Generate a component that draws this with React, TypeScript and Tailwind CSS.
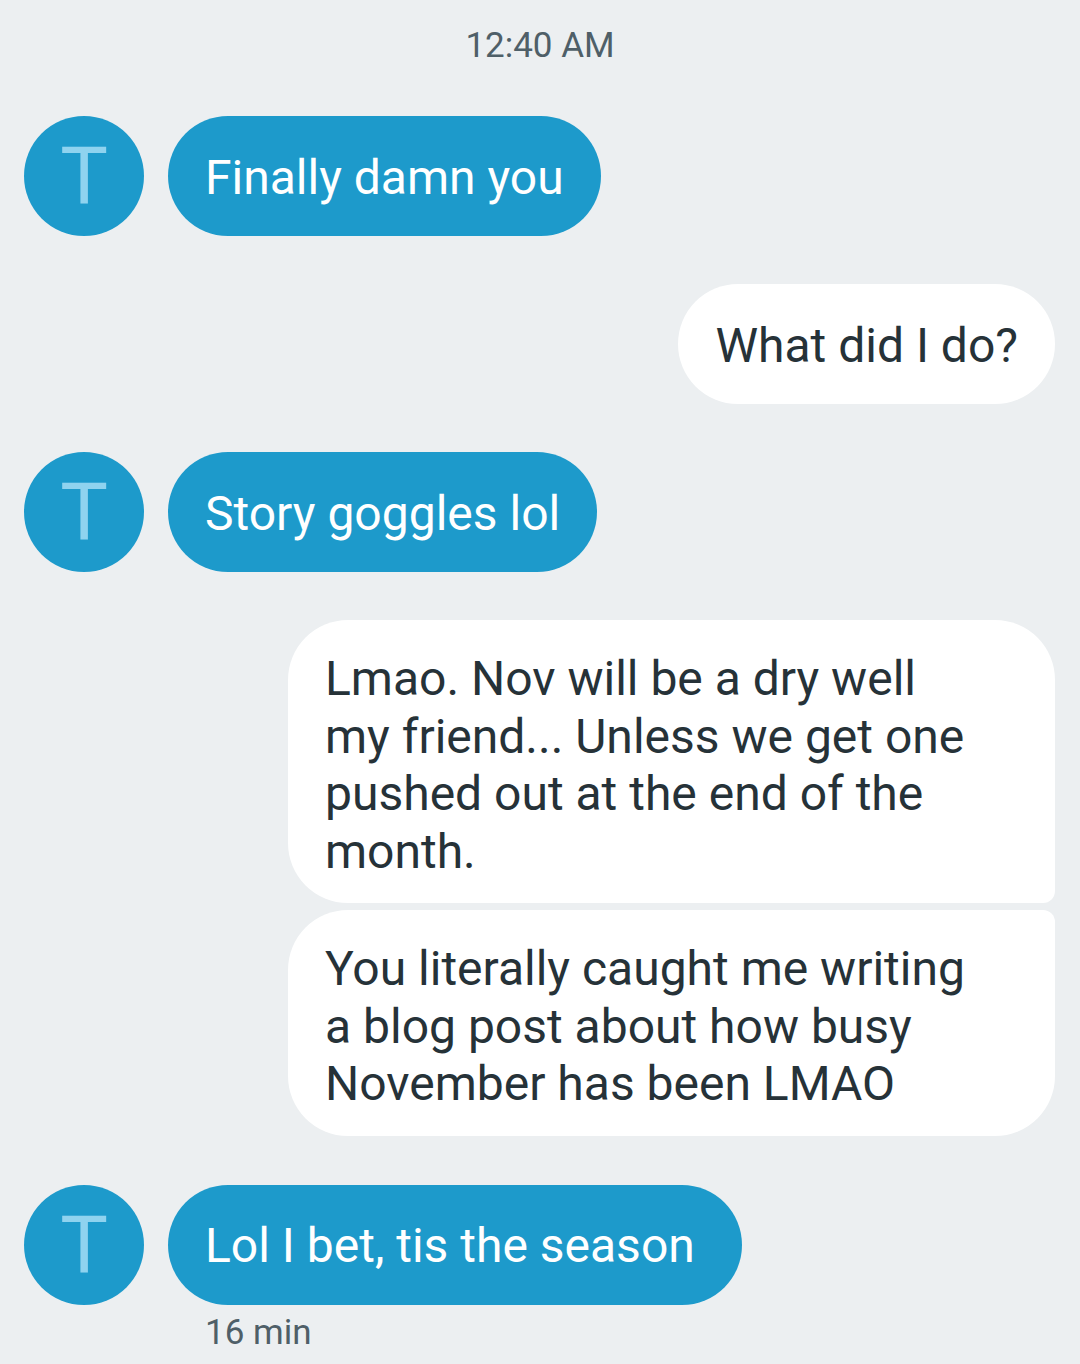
import React from 'react'

const font = { fontFamily: 'Roboto, "Noto Sans", sans-serif' }

const Avatar = () => (
    <div className="w-[120px] h-[120px] shrink-0 rounded-full bg-[#1d9acb] flex items-center justify-center">
        <span className="text-[80px] font-normal leading-none text-[#8fd3ef] mt-[2px]">T</span>
    </div>
)

const Incoming = ({ text, wide }: { text: string; wide?: boolean }) => (
    <div className="flex items-center gap-6 pl-6">
        <Avatar />
        <div
            className={
                wide
                    ? 'h-[120px] flex items-center rounded-full bg-[#1d9acb] pl-[37px] pr-[47px] pt-[3px] text-[48px] text-white'
                    : 'h-[120px] flex items-center rounded-full bg-[#1d9acb] px-[37px] pt-[3px] text-[48px] text-white'
            }
        >
            {text}
        </div>
    </div>
)

const Lines = ({ lines }: { lines: string[] }) => (
    <>
        {lines.map((l) => (
            <span key={l} className="block whitespace-nowrap">{l}</span>
        ))}
    </>
)

export default function App() {
    return (
        <div style={font} className="w-[1080px] h-[1364px] bg-[#eceff1] overflow-hidden">
            <div className="pt-[26px] text-center text-[35px] leading-[40px] text-[#4f5f68]">12:40 AM</div>

            <div className="mt-[50px] flex flex-col">
                <Incoming text="Finally damn you" />

                <div className="mt-12 flex justify-end pr-[25px]">
                    <div className="h-[120px] flex items-center rounded-full bg-white px-[37px] pt-[3px] text-[48px] text-[#263238]">
                        What did I do?
                    </div>
                </div>

                <div className="mt-12">
                    <Incoming text="Story goggles lol" />
                </div>

                <div className="mt-12 flex flex-col items-end gap-[7px] pr-[25px]">
                    <div className="w-[767px] bg-white rounded-[60px] rounded-br-[12px] pl-[37px] pr-[30px] pt-[30px] pb-[23px] text-[48px] leading-[57.5px] text-[#263238]">
                        <Lines lines={['Lmao. Nov will be a dry well', 'my friend... Unless we get one', 'pushed out at the end of the', 'month.']} />
                    </div>
                    <div className="w-[767px] bg-white rounded-[60px] rounded-tr-[12px] pl-[37px] pr-[30px] pt-[30px] pb-[23px] text-[48px] leading-[57.5px] text-[#263238]">
                        <Lines lines={['You literally caught me writing', 'a blog post about how busy', 'November has been LMAO']} />
                    </div>
                </div>

                <div className="mt-[49px]">
                    <Incoming text="Lol I bet, tis the season" wide />
                </div>

                <div className="pl-[205px] mt-[8px] text-[35px] leading-[40px] text-[#4f5f68]">16 min</div>
            </div>
        </div>
    )
}
